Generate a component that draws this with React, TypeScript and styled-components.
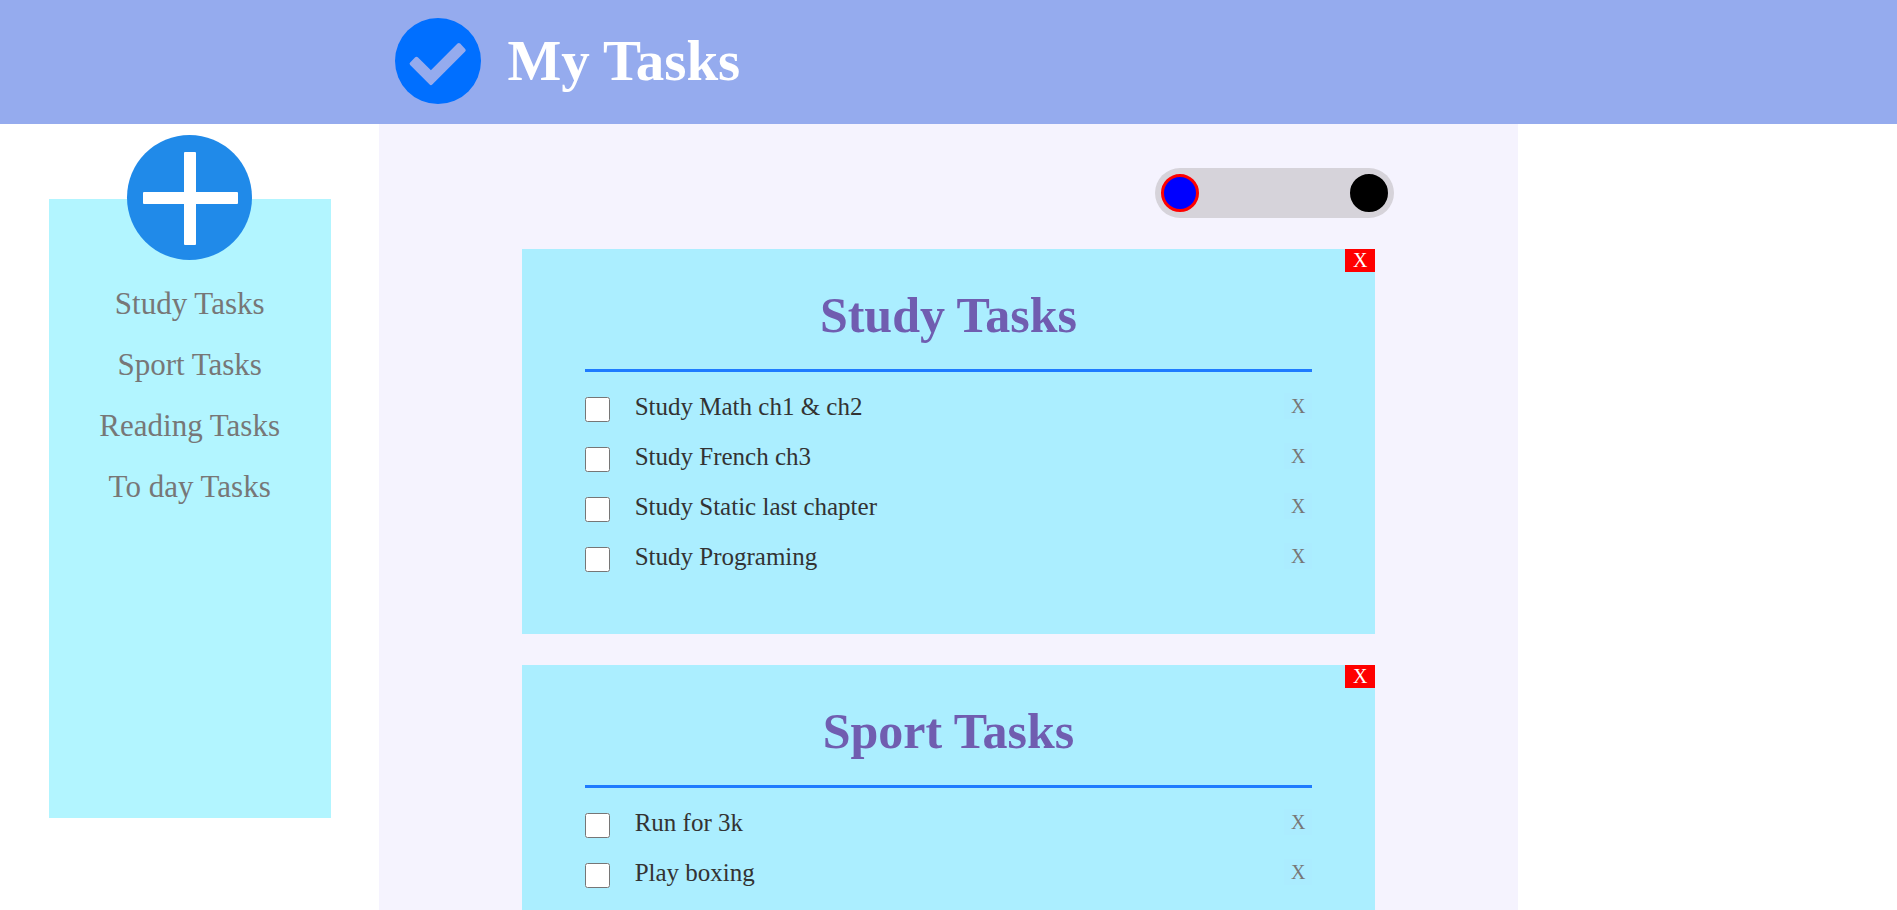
import React, { useState } from 'react';
import styled, { createGlobalStyle } from 'styled-components';

const GlobalStyle = createGlobalStyle`
  *, *::before, *::after { box-sizing: border-box; }
  body {
    margin: 0;
    background: #fff;
    font-family: "Liberation Serif", "Times New Roman", serif;
  }
  button { font-family: inherit; cursor: pointer; }
`;

const Page = styled.div`
  display: flex;
  flex-direction: column;
  height: 100vh;
`;

const Header = styled.header`
  display: flex;
  align-items: center;
  flex: none;
  gap: 26px;
  padding: 18px 0 20px calc(20% + 16px);
  background: #95abee;
`;

const Logo = styled.svg`
  width: 86px;
  height: 86px;
`;

const PageTitle = styled.h1`
  margin: 0;
  color: #fff;
  font-size: 57px;
  line-height: 66px;
`;

const Columns = styled.div`
  display: grid;
  grid-template-columns: 1fr 3fr 1fr;
  flex: 1;
  min-height: 0;
`;

const Sidebar = styled.aside`
  display: flex;
  flex-direction: column;
  align-items: center;
  padding-top: 75px;
`;

const SidePanel = styled.div`
  display: flex;
  flex-direction: column;
  align-items: center;
  width: 282px;
  height: 619px;
  background: #b2f5ff;
`;

const AddButton = styled.button`
  flex: none;
  width: 125px;
  height: 125px;
  margin-top: -64px;
  padding: 0;
  border: 0;
  border-radius: 50%;
  background: #208ae9;

  svg { display: block; }
`;

const ListNav = styled.nav`
  display: flex;
  flex-direction: column;
  align-items: center;
  padding-top: 26px;
  gap: 25px;
`;

const ListLink = styled.a`
  color: #777;
  font-size: 31px;
  line-height: 36px;
  text-decoration: none;
`;

const Main = styled.main`
  display: flex;
  flex-direction: column;
  gap: 31px;
  padding-top: 44px;
  background: #f5f3fe;
  overflow-y: auto;
  scrollbar-width: none;
`;

const ThemeSwitch = styled.div`
  display: flex;
  flex: none;
  justify-content: space-between;
  align-self: flex-end;
  width: 21%;
  margin-right: 124px;
  padding: 6px;
  border-radius: 25px;
  background: #d6d3da;
`;

const Swatch = styled.button<{ $color: string; $active: boolean }>`
  width: 38px;
  height: 38px;
  padding: 0;
  border: 3px solid ${(p) => (p.$active ? '#f00' : p.$color)};
  border-radius: 50%;
  background: ${(p) => p.$color};
`;

const Card = styled.section`
  position: relative;
  flex: none;
  align-self: center;
  width: 75%;
  padding: 37px 63px 41px;
  background: #abeeff;
`;

const CloseButton = styled.button`
  position: absolute;
  top: 0;
  right: 0;
  width: 30px;
  height: 23px;
  padding: 0 0 2px;
  border: 0;
  background: #f00;
  color: #fff;
  font-size: 20px;
  line-height: 20px;
`;

const CardTitle = styled.h2`
  margin: 0 0 21px;
  padding-bottom: 25px;
  border-bottom: 3px solid #1f7bff;
  color: #705db0;
  font-size: 50px;
  line-height: 58px;
  text-align: center;
`;

const TaskList = styled.ul`
  margin: 0;
  padding: 0;
  list-style: none;
`;

const TaskRow = styled.li`
  display: flex;
  align-items: flex-start;
  justify-content: space-between;
  height: 50px;
`;

const TaskLabel = styled.label`
  display: flex;
  align-items: flex-start;
  gap: 25px;
  color: #333;
  font-size: 25px;
  line-height: 28px;
`;

const TaskCheck = styled.input`
  width: 25px;
  height: 25px;
  margin: 4px 0 0;
`;

const RemoveButton = styled.button`
  width: 28px;
  height: 26px;
  padding: 0;
  border: 0;
  background: #abecff;
  color: #777;
  font-size: 20px;
  line-height: 26px;
`;

const lists = [
  {
    name: 'Study Tasks',
    tasks: ['Study Math ch1 & ch2', 'Study French ch3', 'Study Static last chapter', 'Study Programing'],
  },
  { name: 'Sport Tasks', tasks: ['Run for 3k', 'Play boxing'] },
];

const links = ['Study Tasks', 'Sport Tasks', 'Reading Tasks', 'To day Tasks'];

const swatches = [
  { name: 'Blue theme', color: '#00f' },
  { name: 'Black theme', color: '#000' },
];

export default function App() {
  const [theme, setTheme] = useState('#00f');

  return (
    <Page>
      <GlobalStyle />
      <Header>
        <Logo viewBox="0 0 256 256" aria-hidden="true">
          <circle cx="128" cy="128" r="128" fill="#006fff" />
          <path
            d="M49 136 L64 121 L107 163 L190 80 L205 96 L107 194 Z"
            fill="#95abee"
            stroke="#95abee"
            strokeWidth="11"
            strokeLinejoin="round"
          />
        </Logo>
        <PageTitle>My Tasks</PageTitle>
      </Header>
      <Columns>
        <Sidebar>
          <SidePanel>
            <AddButton aria-label="Add list">
              <svg width="125" height="125" viewBox="0 0 125 125" aria-hidden="true">
                <rect x="57" y="17" width="12" height="93" rx="1" fill="#fff" />
                <rect x="16" y="57" width="95" height="12" rx="1" fill="#fff" />
              </svg>
            </AddButton>
            <ListNav>
              {links.map((name) => (
                <ListLink key={name} href="#">{name}</ListLink>
              ))}
            </ListNav>
          </SidePanel>
        </Sidebar>
        <Main>
          <ThemeSwitch>
            {swatches.map((s) => (
              <Swatch
                key={s.color}
                $color={s.color}
                $active={theme === s.color}
                aria-label={s.name}
                onClick={() => setTheme(s.color)}
              />
            ))}
          </ThemeSwitch>
          {lists.map((list) => (
            <Card key={list.name}>
              <CloseButton aria-label={`Delete ${list.name}`}>X</CloseButton>
              <CardTitle>{list.name}</CardTitle>
              <TaskList>
                {list.tasks.map((task) => (
                  <TaskRow key={task}>
                    <TaskLabel>
                      <TaskCheck type="checkbox" />
                      {task}
                    </TaskLabel>
                    <RemoveButton aria-label={`Remove ${task}`}>X</RemoveButton>
                  </TaskRow>
                ))}
              </TaskList>
            </Card>
          ))}
        </Main>
      </Columns>
    </Page>
  );
}
